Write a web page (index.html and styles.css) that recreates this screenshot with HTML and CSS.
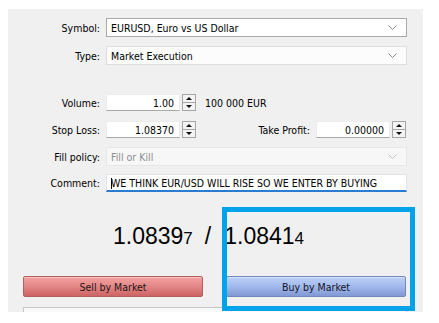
FILE: index.html
```html
<!DOCTYPE html>
<html lang="en">
<head>
    <meta charset="UTF-8">
    <meta name="viewport" content="width=device-width, initial-scale=1.0">
    <title>New Order</title>
    <link rel="stylesheet" href="styles.css">
</head>
<body>
    <div class="panel">
        <div class="form">
            <div class="row row-symbol">
                <label>Symbol:</label>
                <div class="select select-main">
                    <span>EURUSD, Euro vs US Dollar</span>
                    <svg class="chevron" width="9" height="6" viewBox="0 0 9 6"><polyline points="0.5,0.5 4.5,4.5 8.5,0.5" fill="none" stroke="#8a8a8a" stroke-width="1"/></svg>
                </div>
            </div>
            <div class="row row-type">
                <label>Type:</label>
                <div class="select select-light">
                    <span>Market Execution</span>
                    <svg class="chevron" width="9" height="6" viewBox="0 0 9 6"><polyline points="0.5,0.5 4.5,4.5 8.5,0.5" fill="none" stroke="#8a8a8a" stroke-width="1"/></svg>
                </div>
            </div>
            <div class="row row-volume">
                <label>Volume:</label>
                <div class="num">
                    <div class="num-input">1.00</div>
                    <svg class="spin" width="14" height="17" viewBox="0 0 14 17">
                        <rect x="0.5" y="0.5" width="13" height="16" fill="#f4f4f4" stroke="#a6a6a6"/>
                        <line x1="1" y1="8.5" x2="13" y2="8.5" stroke="#a6a6a6"/>
                        <polygon points="4,6 10,6 7,3" fill="#111"/>
                        <polygon points="4,11 10,11 7,14" fill="#111"/>
                    </svg>
                </div>
                <span class="unit">100 000 EUR</span>
            </div>
            <div class="row row-stops">
                <label>Stop Loss:</label>
                <div class="num">
                    <div class="num-input">1.08370</div>
                    <svg class="spin" width="14" height="17" viewBox="0 0 14 17">
                        <rect x="0.5" y="0.5" width="13" height="16" fill="#f4f4f4" stroke="#a6a6a6"/>
                        <line x1="1" y1="8.5" x2="13" y2="8.5" stroke="#a6a6a6"/>
                        <polygon points="4,6 10,6 7,3" fill="#111"/>
                        <polygon points="4,11 10,11 7,14" fill="#111"/>
                    </svg>
                </div>
                <div class="take-profit">
                    <span class="tp-label">Take Profit:</span>
                    <div class="num">
                        <div class="num-input">0.00000</div>
                        <svg class="spin" width="14" height="17" viewBox="0 0 14 17">
                            <rect x="0.5" y="0.5" width="13" height="16" fill="#f4f4f4" stroke="#a6a6a6"/>
                            <line x1="1" y1="8.5" x2="13" y2="8.5" stroke="#a6a6a6"/>
                            <polygon points="4,6 10,6 7,3" fill="#111"/>
                            <polygon points="4,11 10,11 7,14" fill="#111"/>
                        </svg>
                    </div>
                </div>
            </div>
            <div class="row row-fill">
                <label>Fill policy:</label>
                <div class="select select-disabled">
                    <span>Fill or Kill</span>
                    <svg class="chevron" width="9" height="6" viewBox="0 0 9 6"><polyline points="0.5,0.5 4.5,4.5 8.5,0.5" fill="none" stroke="#c4c4c4" stroke-width="1"/></svg>
                </div>
            </div>
            <div class="row row-comment">
                <label>Comment:</label>
                <div class="comment"><span class="caret"></span>WE THINK EUR/USD WILL RISE SO WE ENTER BY BUYING</div>
            </div>
        </div>

        <div class="prices">
            <span class="price">1.0839<small>7</small></span>
            <span class="slash">/</span>
            <span class="price">1.0841<small>4</small></span>
        </div>

        <div class="actions">
            <button class="btn btn-sell">Sell by Market</button>
            <button class="btn btn-buy">Buy by Market</button>
        </div>

        <div class="log"></div>

        <!-- highlight frame drawn over the buy side -->
        <div class="highlight"></div>
    </div>
</body>
</html>
```

FILE: styles.css
```css
body {
    margin: 0;
    padding: 9px 16px 0 8px;
    background-color: #fff;
    font-family: "DejaVu Sans Condensed", "DejaVu Sans", sans-serif;
    font-stretch: condensed;
    font-size: 10.5px;
    color: #000;
}

.panel {
    position: relative;
    width: 415px;
    height: 303px;
    background-color: #f0f0f0;
    overflow: hidden;
}

.form {
    padding-top: 9px;
}

.row {
    display: flex;
    align-items: center;
    width: 399px;
}

.row label {
    width: 92px;
    margin-right: 6px;
    text-align: right;
    flex-shrink: 0;
}

.row-symbol { margin-bottom: 9px; }
.row-type { margin-bottom: 29px; }
.row-volume { margin-bottom: 10px; }
.row-stops { margin-bottom: 9px; }
.row-fill { margin-bottom: 8px; }

.select {
    display: flex;
    align-items: center;
    justify-content: space-between;
    box-sizing: border-box;
    width: 301px;
    height: 19px;
    padding: 0 9px 0 4px;
}

.select-main {
    background-color: #fff;
    border: 1px solid #a9a9a9;
}

.select-light {
    background-color: #fcfcfc;
    border: 1px solid #dedede;
}

.select-disabled {
    background-color: #f7f7f7;
    border: 1px solid #e6e6e6;
    color: #8e8e8e;
}

.num {
    display: flex;
    align-items: center;
}

.num-input {
    box-sizing: border-box;
    width: 74px;
    height: 17px;
    line-height: 16px;
    padding-right: 5px;
    text-align: right;
    background-color: #fff;
    border: 1px solid #ececec;
    border-bottom-color: #a8a8a8;
}

.spin {
    display: block;
    margin-left: 2px;
}

.unit {
    margin-left: 9px;
}

.take-profit {
    display: flex;
    align-items: center;
    margin-left: auto;
    margin-right: 1px;
}

.tp-label {
    margin-right: 6px;
}

.comment {
    box-sizing: border-box;
    width: 301px;
    height: 18px;
    line-height: 16px;
    padding-left: 4px;
    background-color: #fff;
    border: 1px solid #e4e4e4;
    border-bottom: 2px solid #2a7bd2;
    white-space: nowrap;
    overflow: hidden;
}

.caret {
    display: inline-block;
    width: 1px;
    height: 11px;
    margin-right: -1px;
    vertical-align: -2px;
    background-color: #000;
}

.prices {
    display: flex;
    align-items: baseline;
    margin-top: 30px;
    padding-left: 105px;
    height: 28px;
    line-height: 28px;
    font-family: "Liberation Sans", Arial, sans-serif;
    font-stretch: normal;
    font-size: 23px;
    color: #000;
}

.price small {
    font-size: 17px;
}

.slash {
    margin: 0 13px 0 12px;
}

.actions {
    display: grid;
    grid-template-columns: 180px 180px;
    column-gap: 23px;
    margin-top: 26px;
    padding-left: 15px;
}

.btn {
    height: 21px;
    padding: 0;
    font-family: "DejaVu Sans Condensed", "DejaVu Sans", sans-serif;
    font-stretch: condensed;
    font-size: 10.5px;
    color: #1e1414;
    border-radius: 2px;
    cursor: pointer;
}

.btn-sell {
    background: linear-gradient(#f4a2a2, #e28686 50%, #cd6464);
    border: 1px solid #b45e5e;
    box-shadow: inset 0 1px 0 #fac2c2;
}

.btn-buy {
    background: linear-gradient(#bcd0f6, #a2b9ec 50%, #8098d4);
    border: 1px solid #7287bd;
    box-shadow: inset 0 1px 0 #d4e1fa;
    color: #141426;
}

.log {
    width: 382px;
    height: 20px;
    margin: 10px 0 0 15px;
    background-color: #f9f9f9;
    border: 1px solid #c6c6c6;
}

.highlight {
    position: absolute;
    left: 214px;
    top: 198px;
    width: 193px;
    height: 104px;
    box-sizing: border-box;
    border: 5px solid #00a2e8;
}
```
